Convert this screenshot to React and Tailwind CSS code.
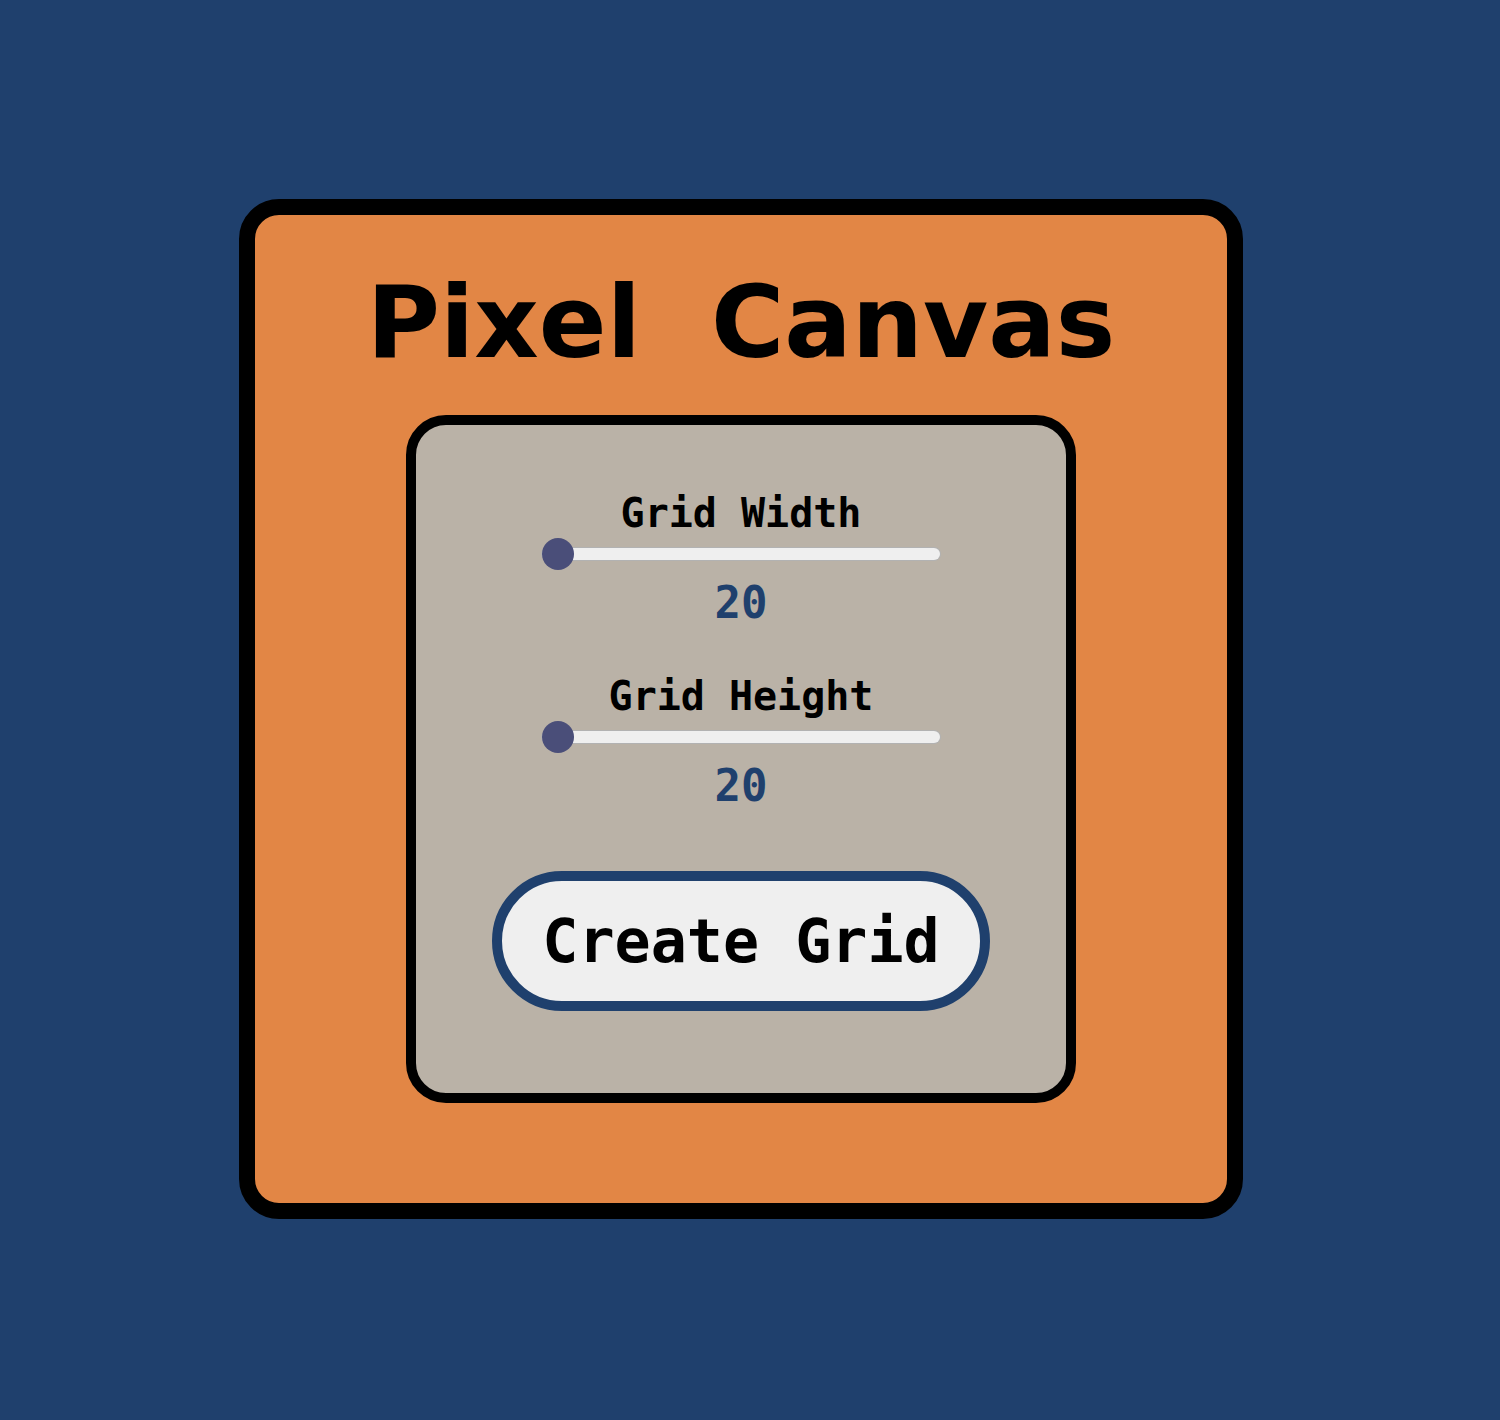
import { useState } from "react";

function GridSlider({ id, label, value, onChange }) {
  return (
    <div className="flex w-full flex-col items-center">
      <label htmlFor={id} className="text-[40px] leading-12 font-bold">
        {label}
      </label>
      <input
        id={id}
        type="range"
        min="20"
        max="100"
        value={value}
        onChange={(e) => onChange(Number(e.target.value))}
        className="mt-[11px] h-3 w-full max-w-[398px] cursor-pointer appearance-none rounded-full bg-[#efefef] shadow-[0_0_0_1px_#b2b2b2] [&::-webkit-slider-thumb]:size-8 [&::-webkit-slider-thumb]:appearance-none [&::-webkit-slider-thumb]:rounded-full [&::-webkit-slider-thumb]:bg-[#4a4e79]"
      />
      <output htmlFor={id} className="mt-[19px] text-[44px] leading-12 font-bold text-[#1f406d]">
        {value}
      </output>
    </div>
  );
}

export default function App() {
  const [width, setWidth] = useState(20);
  const [height, setHeight] = useState(20);

  return (
    <div className="flex min-h-screen items-center justify-center bg-[#1f406d] pr-[18px] pb-0.5 font-['DejaVu_Sans_Mono',monospace] text-black">
      <main className="flex w-full max-w-[1004px] flex-col items-center rounded-[40px] border-16 border-black bg-[#e28645] pt-12 pb-[100px]">
        <h1 className="mb-8 flex gap-[70px] font-['DejaVu_Sans',sans-serif] text-[100px] leading-[120px] font-bold whitespace-nowrap">
          <span>Pixel</span> <span>Canvas</span>
        </h1>
        <form
          onSubmit={(e) => e.preventDefault()}
          className="flex w-full max-w-[670px] flex-col items-center rounded-[40px] border-10 border-black bg-[#bab2a7] pt-16 pb-[82px]"
        >
          <div className="flex w-full flex-col items-center gap-[45px]">
            <GridSlider id="grid-width" label="Grid Width" value={width} onChange={setWidth} />
            <GridSlider id="grid-height" label="Grid Height" value={height} onChange={setHeight} />
          </div>
          <button
            type="submit"
            className="mt-[61px] cursor-pointer rounded-full border-10 border-[#1f406d] bg-[#efefef] px-10 py-5 text-[60px] leading-20 font-bold"
          >
            Create Grid
          </button>
        </form>
      </main>
    </div>
  );
}
